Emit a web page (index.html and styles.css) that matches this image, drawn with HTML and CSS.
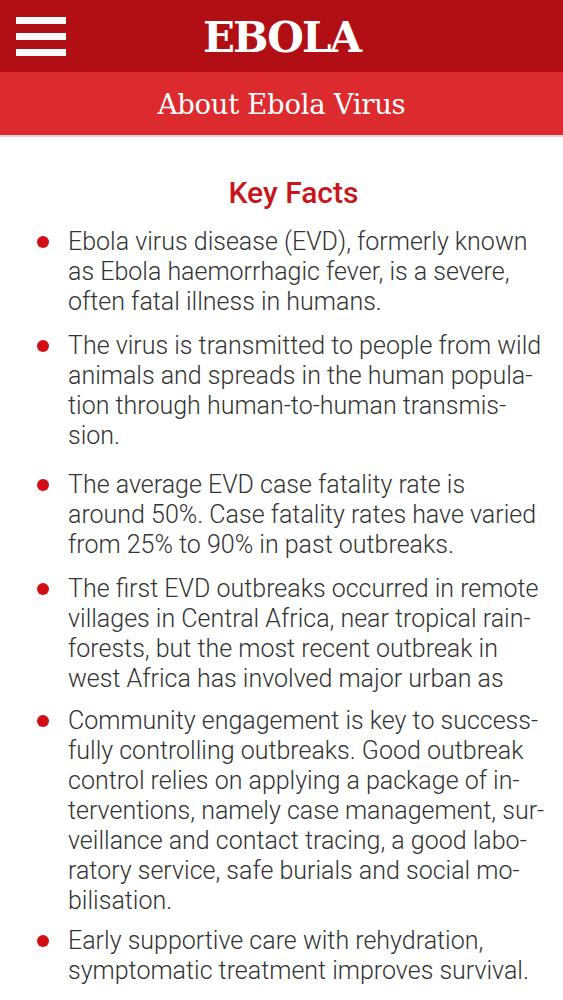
FILE: index.html
```html
<!DOCTYPE html>
<html lang="en">
<head>
<meta charset="utf-8">
<link rel="stylesheet" href="styles.css">
</head>
<body>
<header class="topbar">
  <div class="menu" aria-label="menu"><span></span><span></span><span></span></div>
  <h1 class="brand">EBOLA</h1>
</header>
<div class="subbar"><h2 class="subtitle">About Ebola Virus</h2></div>
<main class="content">
  <h3 class="heading">Key Facts</h3>
  <ul class="facts">
    <li>Ebola virus disease (EVD), formerly known as Ebola haemorrhagic fever, is a severe, often fatal illness in humans.</li>
    <li>The virus is transmitted to people from wild animals and spreads in the human popula&shy;tion through human-to-human transmis&shy;sion.</li>
    <li>The average EVD case fatality rate is around 50%. Case fatality rates have varied from 25% to 90% in past outbreaks.</li>
    <li>The first EVD outbreaks occurred in remote villages in Central Africa, near tropical rain&shy;forests, but the most recent outbreak in west Africa has involved major urban as</li>
    <li>Community engagement is key to success&shy;fully controlling outbreaks. Good outbreak control relies on applying a package of in&shy;terventions, namely case management, sur&shy;veillance and contact tracing, a good labo&shy;ratory service, safe burials and social mo&shy;bilisation.</li>
    <li>Early supportive care with rehydration, symptomatic treatment improves survival.</li>
  </ul>
</main>
</body>
</html>
```
FILE: styles.css
```css
html, body {
  margin: 0;
  padding: 0;
  background: #fff;
}
.topbar {
  height: 72px;
  background: #b20f14;
  display: flex;
  align-items: center;
  justify-content: center;
  position: relative;
}
.menu {
  position: absolute;
  left: 16px;
  top: 17px;
  display: flex;
  flex-direction: column;
  gap: 9px;
}
.menu span {
  display: block;
  width: 50px;
  height: 7px;
  background: #fff;
}
.brand {
  margin: 0;
  font-family: "DejaVu Serif", serif;
  font-weight: bold;
  font-size: 42px;
  letter-spacing: -2px;
  color: #fff;
  line-height: 72px;
  position: relative;
  top: 2px;
}
.subbar {
  height: 63px;
  background: #dc2a2e;
  border-bottom: 2px solid #eccfd0;
  display: flex;
  align-items: center;
  justify-content: center;
}
.subtitle {
  margin: 0;
  font-family: "DejaVu Serif", serif;
  font-weight: normal;
  font-size: 27.5px;
  letter-spacing: -0.3px;
  color: #fff;
}
.content {
  padding: 0 18px 0 30px;
  font-family: Roboto, "Noto Sans", sans-serif;
}
.heading {
  margin: 38px 0 0;
  text-align: center;
  font-size: 30px;
  font-weight: 500;
  color: #c8161d;
  line-height: 36px;
  padding-left: 12px;
}
.facts {
  list-style: none;
  margin: 16px 0 0;
  padding: 0;
}
.facts li {
  position: relative;
  padding-left: 38px;
  font-size: 25px;
  font-weight: 300;
  line-height: 30px;
  color: #333;
  margin-bottom: 14px;
}
.facts li:nth-child(2) {
  margin-bottom: 19px;
}
.facts li:nth-child(4) {
  margin-bottom: 12px;
}
.facts li:nth-child(5) {
  margin-bottom: 10px;
}
.facts li::before {
  content: "";
  position: absolute;
  left: 7px;
  top: 9px;
  width: 12px;
  height: 12px;
  border-radius: 50%;
  background: #d10d16;
}
```
